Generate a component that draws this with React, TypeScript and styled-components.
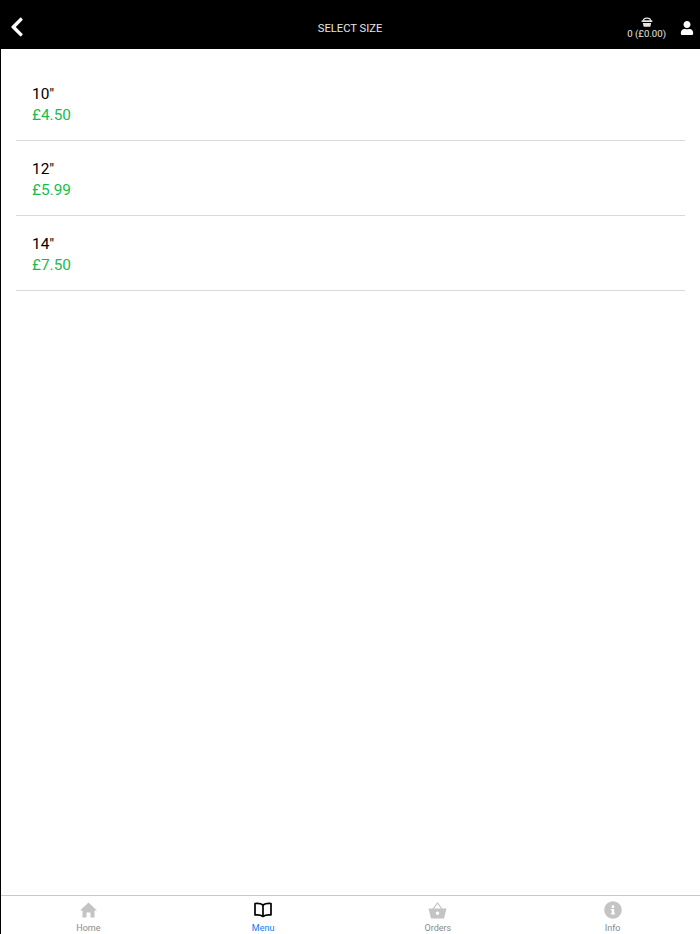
import styled, { createGlobalStyle } from 'styled-components';
import { FaChevronLeft, FaUser, FaInfoCircle } from 'react-icons/fa';

const GlobalStyle = createGlobalStyle`
    html, body {
        margin: 0;
        padding: 0;
        background: #fff;
        font-family: Roboto, "Liberation Sans", sans-serif;
    }
`;

const Page = styled.div`
    width: 700px;
    height: 934px;
    display: flex;
    flex-direction: column;
    box-sizing: border-box;
    border-left: 1px solid #000;
    overflow: hidden;
`;

const Header = styled.header`
    height: 49px;
    margin-left: -1px;
    flex-shrink: 0;
    background: #000;
    color: #fff;
    display: grid;
    grid-template-columns: 1fr auto 1fr;
    align-items: center;
`;

const BackBtn = styled.div`
    display: flex;
    align-items: center;
    padding: 4px 0 0 6px;
    font-size: 22px;
    height: 100%;
    box-sizing: border-box;
`;

const Title = styled.div`
    font-size: 11.2px;
    line-height: 14px;
    margin-top: 8px;
    color: #e6e6e6;
`;

const HeaderRight = styled.div`
    display: flex;
    justify-content: flex-end;
    align-items: center;
    padding-right: 6px;
    gap: 14px;
`;

const Basket = styled.div`
    display: flex;
    flex-direction: column;
    align-items: center;
    font-size: 9.6px;
    line-height: 12px;
    color: #e6e6e6;
    margin-top: 7px;
`;

const UserIcon = styled.div`
    display: flex;
    font-size: 14px;
    margin-top: 7px;
`;

const List = styled.ul`
    flex: 1;
    list-style: none;
    margin: 0;
    padding: 17px 15px 0 15px;
`;

const Item = styled.li`
    height: 75px;
    box-sizing: border-box;
    padding: 18px 16px 0;
    border-bottom: 1px solid #d9d9d9;
`;

const SizeName = styled.div`
    font-size: 15.4px;
    line-height: 21px;
    color: #000;
`;

const Price = styled.div`
    font-size: 15.4px;
    line-height: 21px;
    color: #15bd4f;
`;

const TabBar = styled.nav`
    height: 39px;
    flex-shrink: 0;
    box-sizing: border-box;
    margin-left: -1px;
    padding-left: 1px;
    border-top: 1px solid #c8c8c8;
    display: grid;
    grid-template-columns: repeat(4, 1fr);
`;

const Tab = styled.div<{ $active?: boolean }>`
    display: flex;
    flex-direction: column;
    align-items: center;
    color: ${(p) => (p.$active ? '#0a7df5' : '#8a8a8a')};
    font-size: 9px;
    line-height: 11px;
`;

const TabIcon = styled.div<{ $active?: boolean }>`
    height: 20px;
    margin-top: 4px;
    margin-bottom: 3px;
    display: flex;
    align-items: center;
    justify-content: center;
    color: ${(p) => (p.$active ? '#000' : '#c4c4c4')};
    font-size: 18px;
`;

const sizes = [
    { name: '10"', price: '£4.50' },
    { name: '12"', price: '£5.99' },
    { name: '14"', price: '£7.50' },
];

function BasketGlyph({ size, color }: { size: number; color: string }) {
    return (
        <svg width={size} height={size} viewBox="0 0 20 20">
            <path d="M4 8 C4 2 16 2 16 8" fill="none" stroke={color} strokeWidth="2" />
            <rect x="1" y="7" width="18" height="3" rx="1" fill={color} />
            <path d="M3 11.5 H17 L15.5 18 H4.5 Z" fill={color} />
        </svg>
    );
}

export default function App() {
    return (
        <Page>
            <GlobalStyle />
            <Header>
                <BackBtn>
                    <FaChevronLeft />
                </BackBtn>
                <Title>SELECT SIZE</Title>
                <HeaderRight>
                    <Basket>
                        <BasketGlyph size={12} color="#e6e6e6" />
                        0 (£0.00)
                    </Basket>
                    <UserIcon>
                        <FaUser />
                    </UserIcon>
                </HeaderRight>
            </Header>
            <List>
                {sizes.map((s) => (
                    <Item key={s.name}>
                        <SizeName>{s.name}</SizeName>
                        <Price>{s.price}</Price>
                    </Item>
                ))}
            </List>
            <TabBar>
                <Tab>
                    <TabIcon>
                        <svg width="17" height="16" viewBox="0 0 17 16">
                            <path d="M8.5 0.5 L17 8.5 H14.5 V15.5 H10.5 V10.5 H6.5 V15.5 H2.5 V8.5 H0 Z" fill="#c4c4c4" />
                        </svg>
                    </TabIcon>
                    Home
                </Tab>
                <Tab $active>
                    <TabIcon $active>
                        <svg width="18" height="16" viewBox="0 0 18 16" fill="none" stroke="#000" strokeWidth="1.7" strokeLinejoin="round">
                            <path d="M9 3 C7 1.5 4 1.2 1 1.5 V13 C4 12.7 7 13 9 14.5 C11 13 14 12.7 17 13 V1.5 C14 1.2 11 1.5 9 3 Z" />
                            <path d="M9 3 V14.5" />
                        </svg>
                    </TabIcon>
                    Menu
                </Tab>
                <Tab>
                    <TabIcon>
                        <svg width="19" height="17" viewBox="0 0 19 17">
                            <path d="M5 7 L9.5 1 L14 7" fill="none" stroke="#c4c4c4" strokeWidth="1.2" />
                            <path fillRule="evenodd" d="M0.5 6.5 H18.5 L16 16.5 H3 Z M9.5 9.5 a1.7 1.7 0 1 0 0.01 0 Z" fill="#c4c4c4" />
                        </svg>
                    </TabIcon>
                    Orders
                </Tab>
                <Tab>
                    <TabIcon>
                        <FaInfoCircle />
                    </TabIcon>
                    Info
                </Tab>
            </TabBar>
        </Page>
    );
}
